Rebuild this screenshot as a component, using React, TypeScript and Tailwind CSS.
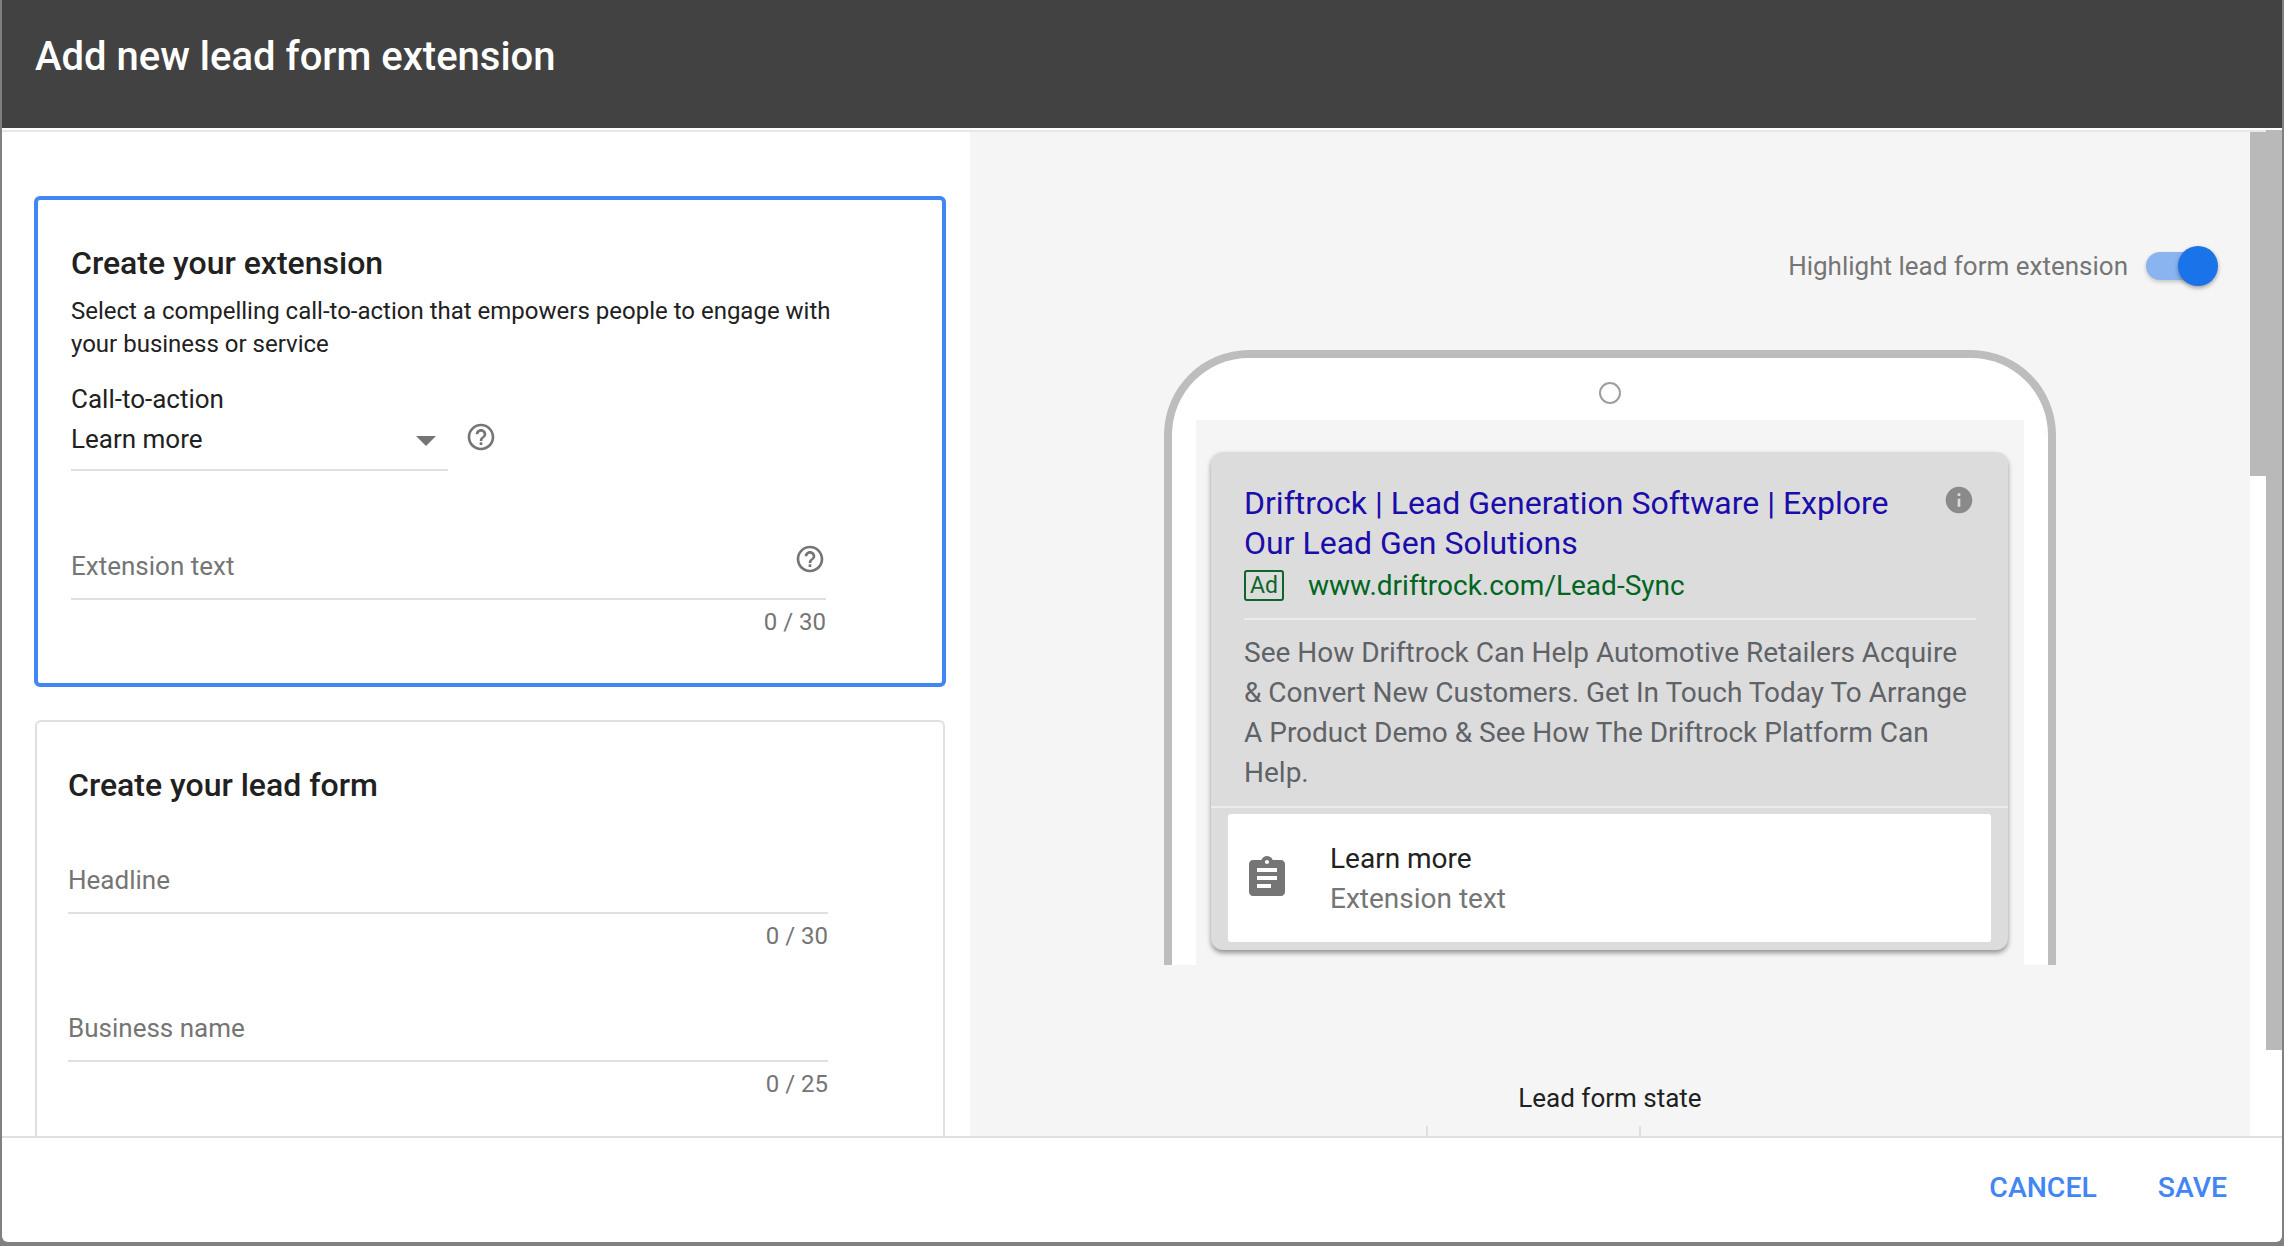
const HELP = "M11 18h2v-2h-2v2zm1-16C6.48 2 2 6.48 2 12s4.48 10 10 10 10-4.48 10-10S17.52 2 12 2zm0 18c-4.41 0-8-3.59-8-8s3.59-8 8-8 8 3.59 8 8-3.59 8-8 8zm0-14c-2.21 0-4 1.79-4 4h2c0-1.1.9-2 2-2s2 .9 2 2c0 2-3 1.75-3 5h2c0-2.25 3-2.5 3-5 0-2.21-1.79-4-4-4z";
const INFO = "M12 2C6.48 2 2 6.48 2 12s4.48 10 10 10 10-4.48 10-10S17.52 2 12 2zm1 15h-2v-6h2v6zm0-8h-2V7h2v2z";
const ASSIGNMENT = "M19 3h-4.18C14.4 1.84 13.3 1 12 1c-1.3 0-2.4.84-2.82 2H5c-1.1 0-2 .9-2 2v14c0 1.1.9 2 2 2h14c1.1 0 2-.9 2-2V5c0-1.1-.9-2-2-2zm-7 0c.55 0 1 .45 1 1s-.45 1-1 1-1-.45-1-1 .45-1 1-1zm2 14H7v-2h7v2zm3-4H7v-2h10v2zm0-4H7V7h10v2z";

function Icon({ d, size, className }: { d: string; size: number; className?: string }) {
  return (
    <svg width={size} height={size} viewBox="0 0 24 24" fill="currentColor" className={className}>
      <path d={d} />
    </svg>
  );
}

function Counter({ text, className }: { text: string; className?: string }) {
  return <div className={"text-right text-[24px] leading-[28px] text-[#757575] " + (className ?? "")}>{text}</div>;
}

function LeadField({ label, count, className }: { label: string; count: string; className?: string }) {
  return (
    <div className={"w-[760px] " + (className ?? "")}>
      <div className="border-b-2 border-[#e0e0e0] pb-[16px] text-[26px] leading-[32px] text-[#757575]">{label}</div>
      <Counter text={count} className="mt-[8px]" />
    </div>
  );
}

function ExtensionCard() {
  return (
    <div className="-ml-[1px] h-[491px] w-[912px] shrink-0 rounded-[6px] border-[4px] border-[#4285f4] pl-[33px] pt-[47px]">
      <div className="text-[32px] font-medium leading-[32px] text-[#212121]">Create your extension</div>
      <div className="mt-[16px] w-[790px] text-[24px] leading-[33px] text-[#212121]">
        Select a compelling call-to-action that empowers people to engage with your business or service
      </div>
      <div className="mt-[22px] text-[26px] leading-[32px] text-[#212121]">Call-to-action</div>
      <div className="flex items-start">
        <div className="flex h-[56px] w-[377px] items-start justify-between border-b-2 border-[#e0e0e0] pt-[8px]">
          <span className="text-[26px] leading-[32px] text-[#212121]">Learn more</span>
          <svg width="20" height="10" viewBox="0 0 20 10" className="mr-[12px] mt-[13px] text-[#757575]" fill="currentColor">
            <path d="M0 0h20L10 10z" />
          </svg>
        </div>
        <Icon d={HELP} size={32} className="ml-[17px] mt-[6px] text-[#757575]" />
      </div>
      <div className="mt-[79px] w-[755px]">
        <div className="flex items-start justify-between border-b-2 border-[#e0e0e0] pb-[16px]">
          <span className="text-[26px] leading-[32px] text-[#757575]">Extension text</span>
          <Icon d={HELP} size={32} className="-mt-[7px] text-[#757575]" />
        </div>
        <Counter text="0 / 30" className="mt-[8px]" />
      </div>
    </div>
  );
}

function LeadFormCard() {
  return (
    <div className="mt-[33px] w-[910px] shrink-0 rounded-t-[6px] border-2 border-b-0 border-[#e0e0e0] pb-[60px] pl-[31px] pt-[47px]">
      <div className="text-[32px] font-medium leading-[32px] text-[#212121]">Create your lead form</div>
      <LeadField label="Headline" count="0 / 30" className="mt-[63px]" />
      <LeadField label="Business name" count="0 / 25" className="mt-[62px]" />
    </div>
  );
}

function AdCard() {
  return (
    <div className="h-[498px] w-[797px] rounded-[12px] bg-[#dcdcdc] pt-[31px] shadow-[0_3px_5px_rgba(0,0,0,0.4)]">
      <div className="px-[33px] pr-[32px]">
        <div className="flex items-start justify-between">
          <div className="w-[660px] text-[32px] leading-[40px] text-[#1a0dab]">
            Driftrock | Lead Generation Software | Explore Our Lead Gen Solutions
          </div>
          <Icon d={INFO} size={32} className="mr-[1px] mt-[1px] text-[#8a8a8a]" />
        </div>
        <div className="mt-[7px] flex h-[31px] items-center">
          <span className="flex h-[31px] w-[40px] items-center justify-center rounded-[3px] border-2 border-[#0d652d] text-[23px] leading-none text-[#0d652d]">
            Ad
          </span>
          <span className="ml-[24px] text-[28px] leading-[29px] text-[#006621]">www.driftrock.com/Lead-Sync</span>
        </div>
        <div className="mt-[17px] h-[2px] bg-[#ebebeb]" />
        <div className="mt-[13px] w-[728px] text-[28px] leading-[40px] text-[#5f6368]">
          See How Driftrock Can Help Automotive Retailers Acquire &amp; Convert New Customers. Get In Touch Today To Arrange A Product Demo &amp; See How The Driftrock Platform Can Help.
        </div>
      </div>
      <div className="mt-[13px] h-[2px] bg-[#ebebeb]" />
      <div className="mx-[17px] mt-[6px] flex h-[128px] items-center rounded-[3px] bg-white pl-[15px]">
        <Icon d={ASSIGNMENT} size={48} className="text-[#757575]" />
        <div className="ml-[39px]">
          <div className="text-[28px] leading-[40px] text-[#212121]">Learn more</div>
          <div className="text-[28px] leading-[39px] text-[#757575]">Extension text</div>
        </div>
      </div>
    </div>
  );
}

function Phone() {
  return (
    <div className="mx-auto mt-[64px] flex h-[615px] w-[892px] shrink-0 flex-col overflow-hidden rounded-t-[85px] border-[8px] border-b-0 border-[#bdbdbd] bg-white px-[24px]">
      <div className="flex h-[62px] shrink-0 justify-center pt-[24px]">
        <div className="h-[22px] w-[22px] rounded-full border-2 border-[#9e9e9e]" />
      </div>
      <div className="flex-1 bg-[#f5f5f5] px-[15px] pt-[32px]">
        <AdCard />
      </div>
    </div>
  );
}

function PreviewPanel() {
  return (
    <div className="flex w-[1280px] shrink-0 flex-col overflow-hidden bg-[#f5f5f5]">
      <div className="flex shrink-0 items-center justify-end pr-[32px] pt-[114px]">
        <span className="text-[26px] leading-[40px] text-[#757575]">Highlight lead form extension</span>
        <div className="ml-[18px] flex h-[40px] items-center">
          <div className="h-[28px] w-[58px] rounded-full bg-[#8ab4f0] shadow-[0_2px_4px_rgba(0,0,0,0.2)]" />
          <div className="-ml-[26px] h-[40px] w-[40px] rounded-full bg-[#1a73e8] shadow-[0_2px_4px_rgba(0,0,0,0.35)]" />
        </div>
      </div>
      <Phone />
      <div className="mt-[117px] shrink-0 text-center text-[26px] leading-[32px] text-[#212121]">Lead form state</div>
      <div className="ml-[456px] mt-[12px] h-[10px] w-[215px] shrink-0 border-x-2 border-[#e0e0e0]" />
    </div>
  );
}

export default function App() {
  return (
    <div className="flex h-[1246px] w-[2284px] overflow-hidden bg-[#808080] pb-[4px] pl-[2px] pr-[2px] font-[Roboto,sans-serif]">
      <div className="flex min-w-0 flex-1 flex-col overflow-hidden rounded-b-[6px] bg-white">
        <div className="h-[128px] shrink-0 bg-[#424242] pl-[33px] pt-[33px] text-[40px] font-medium leading-[48px] text-white">
          Add new lead form extension
        </div>
        <div className="h-[2px] shrink-0 bg-white" />
        <div className="flex min-h-0 flex-1">
          <div className="flex min-w-0 flex-1 flex-col">
            <div className="h-[2px] shrink-0 bg-[#e8e8e8]" />
            <div className="flex min-h-0 flex-1">
              <div className="flex w-[968px] shrink-0 flex-col overflow-hidden pl-[33px] pt-[64px]">
                <ExtensionCard />
                <LeadFormCard />
              </div>
              <PreviewPanel />
              <div className="w-[16px] shrink-0">
                <div className="h-[344px] bg-[#b9b9b9]" />
              </div>
            </div>
          </div>
          <div className="w-[16px] shrink-0">
            <div className="h-[920px] bg-[#b9b9b9]" />
          </div>
        </div>
        <div className="flex h-[106px] shrink-0 items-center justify-end gap-[61px] border-t-2 border-[#e0e0e0] pb-[5px] pr-[55px] text-[28.4px] font-medium leading-[32px] text-[#4285f4]">
          <span>CANCEL</span>
          <span>SAVE</span>
        </div>
      </div>
    </div>
  );
}
